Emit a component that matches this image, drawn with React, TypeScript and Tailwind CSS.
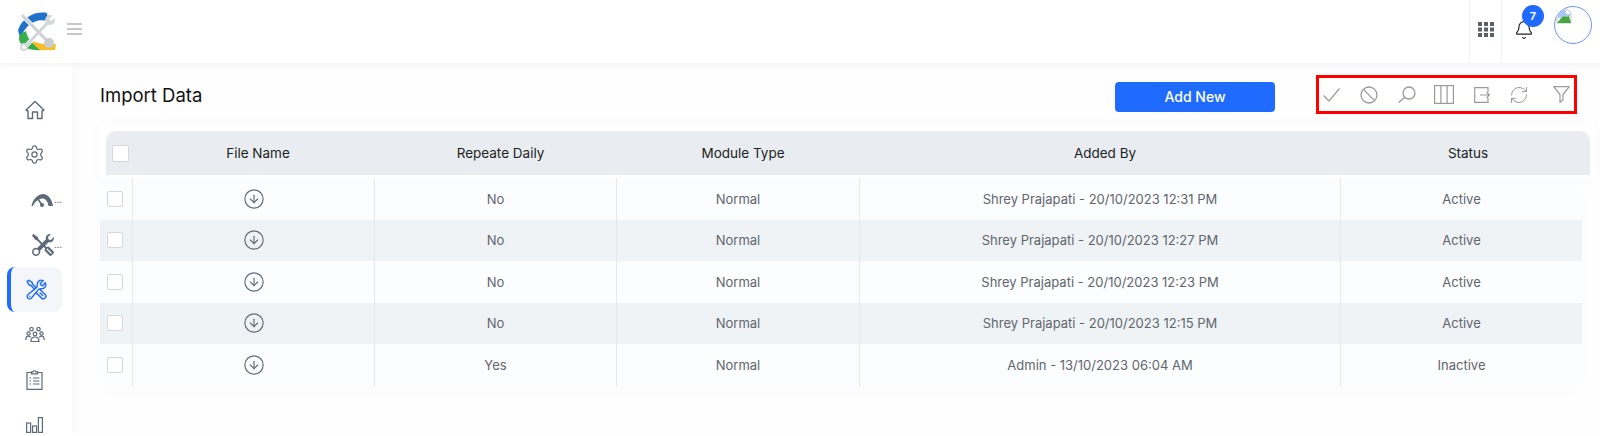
import type { ReactNode } from "react";
import { Bell, CircleArrowDown, RefreshCw, Settings } from "lucide-react";
import { BsTools } from "react-icons/bs";
import { HiOutlineWrenchScrewdriver } from "react-icons/hi2";

type Row = { repeat: string; by: string; status: string };

const rows: Row[] = [
  { repeat: "No", by: "Shrey Prajapati - 20/10/2023 12:31 PM", status: "Active" },
  { repeat: "No", by: "Shrey Prajapati - 20/10/2023 12:27 PM", status: "Active" },
  { repeat: "No", by: "Shrey Prajapati - 20/10/2023 12:23 PM", status: "Active" },
  { repeat: "No", by: "Shrey Prajapati - 20/10/2023 12:15 PM", status: "Active" },
  { repeat: "Yes", by: "Admin - 13/10/2023 06:04 AM", status: "Inactive" },
];

function Logo() {
  return (
    <svg width="40" height="40" viewBox="0 0 40 40" fill="none">
      <path d="M29 1 C17 -1 5 5 0 18 L2 26 C5 20 9 13 16 10 C20 8 25 8 30 9 Z" fill="#1f72c9" />
      <path d="M2 22 L8 19 C9 26 14 32 24 38 C14 39 1 36 1 26 Z" fill="#35ad4a" />
      <path d="M13 28 C20 32 27 33 38 32 L37 38 L22 38 C18 35 15 32 13 28 Z" fill="#f7bd23" />
      <path d="M4 3 L33 33" stroke="#fff" strokeWidth="4.5" />
      <path d="M35 5 L7 35" stroke="#fff" strokeWidth="4.5" />
      <path d="M4 3 L33 33" stroke="#cfd2d4" strokeWidth="3" />
      <path d="M33 7 L7 35" stroke="#d3d5d7" strokeWidth="3" />
      <circle cx="32" cy="8" r="5" fill="#d3d5d7" />
      <path d="M32 8 L40 1" stroke="#fff" strokeWidth="3" />
      <circle cx="6" cy="35" r="3" fill="#fff" stroke="#d3d5d7" strokeWidth="2" />
      <circle cx="31" cy="31" r="5" fill="#c9ccce" />
    </svg>
  );
}

function HomeIcon() {
  return (
    <svg width="20" height="20" viewBox="0 0 20 20" fill="none" stroke="currentColor" strokeWidth="1.4" strokeLinejoin="round">
      <path d="M1 10 L10 1.5 L19 10 L17 11 V18.5 H12.5 V12 H7.5 V18.5 H3 V11 Z" />
    </svg>
  );
}

function GaugeIcon() {
  return (
    <span className="ml-auto flex items-center">
      <svg width="24" height="16" viewBox="0 0 24 16" fill="none">
        <path d="M1.5 14 C3 6 9 2 13 2 C18 2 22 7 23 14 L18.5 14 C18 10 16 7 13 6.5 C9 6.5 5 9 3 14 Z" fill="#5d6a78" />
        <path d="M8 7 L12 13" stroke="#5d6a78" strokeWidth="1.6" />
        <circle cx="12" cy="13" r="2" fill="#5d6a78" />
      </svg>
      <span className="text-[9px] leading-none text-[#5d6a78]">...</span>
    </span>
  );
}

function ToolsIcon() {
  return (
    <span className="ml-auto flex items-center">
      <BsTools className="h-[22px] w-[22px] text-[#5d6a78]" />
      <span className="text-[9px] leading-none text-[#5d6a78]">...</span>
    </span>
  );
}

function UsersIcon() {
  return (
    <svg width="20" height="15" viewBox="0 0 20 15" fill="none" stroke="currentColor" strokeWidth="1.2">
      <circle cx="6.5" cy="2.2" r="1.7" />
      <circle cx="13.5" cy="2.2" r="1.7" />
      <circle cx="3.5" cy="6.5" r="1.6" />
      <circle cx="10" cy="7" r="1.8" />
      <circle cx="16.5" cy="6.5" r="1.6" />
      <path d="M0.8 13 C0.8 10.5 2 9.2 3.5 9.2 C4.6 9.2 5.4 9.8 5.8 10.6" />
      <path d="M19.2 13 C19.2 10.5 18 9.2 16.5 9.2 C15.4 9.2 14.6 9.8 14.2 10.6" />
      <path d="M6 14.5 C6 11.5 8 10 10 10 C12 10 14 11.5 14 14.5 Z" />
    </svg>
  );
}

function ClipboardIcon() {
  return (
    <svg width="17" height="20" viewBox="0 0 17 20" fill="none" stroke="currentColor" strokeWidth="1.2">
      <path d="M5 2.5 H1 V19.3 H16 V2.5 H12" />
      <path d="M5.5 3.8 V1.8 H7 C7 0.4 10 0.4 10 1.8 H11.5 V3.8 Z" />
      <path d="M3.5 8 H5 M7 8 H13.5 M3.5 11 H5 M7 11 H13.5 M3.5 14 H5 M7 14 H13.5" />
    </svg>
  );
}

function ChartIcon() {
  return (
    <svg width="17" height="16" viewBox="0 0 17 16" fill="none" stroke="currentColor" strokeWidth="1.2">
      <rect x="0.6" y="6" width="4" height="9.4" />
      <rect x="6.6" y="9" width="4" height="6.4" />
      <rect x="12.4" y="0.6" width="4" height="14.8" />
    </svg>
  );
}

function SideItem({ children, active }: { children: ReactNode; active?: boolean }) {
  return (
    <div
      className={
        active
          ? "flex h-[45px] w-[55px] shrink-0 items-center justify-center rounded-lg border-l-[4px] border-[#1f6bff] bg-[#f4f6fa] text-[#1f6bff]"
          : "flex h-[45px] w-[55px] shrink-0 items-center justify-center text-[#5d6a78]"
      }
    >
      {children}
    </div>
  );
}

function Sidebar() {
  return (
    <aside className="flex w-[72px] shrink-0 flex-col overflow-hidden bg-white pl-[7px] pt-[24px] shadow-[3px_0_10px_rgba(0,0,0,0.025)]">
      <SideItem><HomeIcon /></SideItem>
      <SideItem><Settings size={21} strokeWidth={1.4} /></SideItem>
      <SideItem><GaugeIcon /></SideItem>
      <SideItem><ToolsIcon /></SideItem>
      <SideItem active><HiOutlineWrenchScrewdriver className="h-[23px] w-[23px]" /></SideItem>
      <SideItem><UsersIcon /></SideItem>
      <SideItem><ClipboardIcon /></SideItem>
      <SideItem><ChartIcon /></SideItem>
    </aside>
  );
}

function Topbar() {
  return (
    <header className="relative z-10 flex h-[63px] shrink-0 items-center justify-between bg-white pl-[18px] pr-[8px] shadow-[0_2px_8px_rgba(0,0,0,0.05)]">
      <div className="flex items-center gap-[9px]">
        <Logo />
        <svg width="15" height="12" viewBox="0 0 15 12" stroke="#8b8f94" strokeWidth="1.2" className="mb-[5px]">
          <path d="M0 1h15M0 6h15M0 11h15" />
        </svg>
      </div>
      <div className="flex h-full items-center">
        <div className="flex h-full w-[33px] items-center justify-center border-x border-[#f1f2f4] pb-[5px]">
          <svg width="16" height="15" viewBox="0 0 16 15" fill="#5b6066">
            <path d="M0 0h4v4H0zM6 0h4v4H6zM12 0h4v4h-4zM0 5.5h4v4H0zM6 5.5h4v4H6zM12 5.5h4v4h-4zM0 11h4v4H0zM6 11h4v4H6zM12 11h4v4h-4z" />
          </svg>
        </div>
        <div className="relative flex h-full w-[44px] items-center justify-center pb-[3px]">
          <Bell size={20} strokeWidth={1.4} className="text-[#222]" />
          <span className="absolute left-[20px] top-[5px] flex h-[22px] w-[22px] items-center justify-center rounded-full bg-[#1f6bff] text-[11px] font-semibold text-white">7</span>
        </div>
        <div className="mb-[13px] ml-[8px] h-[38px] w-[38px] overflow-hidden rounded-full border border-[#6f96f0] pl-[1px] pt-[1px]">
          <svg width="16" height="16" viewBox="0 0 16 16" fill="none">
            <path d="M1 1 H11 L15 5 V15 H1 Z" fill="#fff" stroke="#c0c4c8" />
            <path d="M2 2 H10 V6 H14 V8 L2 10 Z" fill="#a9c7f2" />
            <path d="M1 15 L6 9 C8 8 11 9 13 8 L15 15 Z" fill="#4aa63f" />
          </svg>
        </div>
      </div>
    </header>
  );
}

function Toolbar() {
  return (
    <div className="flex h-[39px] items-center gap-[20px] border-[3px] border-[#ff0000] bg-white pl-[4px] pr-[4px] text-[#9a9a9a]">
      <svg width="17" height="14" viewBox="0 0 17 14" fill="none" stroke="currentColor" strokeWidth="1.2">
        <path d="M0.5 7.5 L6 13 L16.5 0.5" />
      </svg>
      <svg width="18" height="18" viewBox="0 0 18 18" fill="none" stroke="currentColor" strokeWidth="1.3">
        <circle cx="9" cy="9" r="8" />
        <path d="M3.4 3.4 L14.6 14.6" />
      </svg>
      <svg width="18" height="17" viewBox="0 0 18 17" fill="none" stroke="currentColor" strokeWidth="1.3">
        <circle cx="11" cy="7" r="6" />
        <path d="M6.8 11.2 L0.7 16.4" />
      </svg>
      <svg width="20" height="19" viewBox="0 0 20 19" fill="none" stroke="currentColor" strokeWidth="1.2" className="-ml-[2px]">
        <rect x="0.6" y="0.6" width="18.8" height="17.8" />
        <path d="M6.9 0.6 V18.4 M13.1 0.6 V18.4" />
      </svg>
      <svg width="16" height="16" viewBox="0 0 16 16" fill="none" stroke="currentColor" strokeWidth="1.2">
        <path d="M14 5 V0.7 H0.7 V15.3 H14 V11" />
        <path d="M6 8 H15.5 M12.5 5 L15.5 8 L12.5 11" />
      </svg>
      <RefreshCw size={20} strokeWidth={1.2} className="-mx-[1px]" />
      <svg width="17" height="17" viewBox="0 0 17 17" fill="none" stroke="currentColor" strokeWidth="1.2" className="ml-[5px]" strokeLinejoin="round">
        <path d="M0.7 0.7 H16.3 L10 8.5 V14 L7 16.3 V8.5 Z" />
      </svg>
    </div>
  );
}

function DataTable() {
  return (
    <div className="mt-[11px]">
      <div className="w-[1495px] bg-white pb-[3px] pl-[6px] pt-[6px] shadow-[0_0_16px_rgba(0,0,0,0.02)]">
        <div className="grid h-[44px] w-[1484px] grid-cols-[31px_242px_243px_242px_482px_1fr] items-center rounded-t-[10px] bg-[#e9ecf0] text-center text-[13.5px] font-normal text-[#1c1f24]">
          <span className="flex pl-[6px]">
            <span className="h-[17px] w-[17px] rounded-[2px] border border-[#d3d8de] bg-white" />
          </span>
          <span>File Name</span>
          <span>Repeate Daily</span>
          <span>Module Type</span>
          <span>Added By</span>
          <span>Status</span>
        </div>
      </div>
      <div className="w-[1482px] shadow-[0_6px_16px_rgba(0,0,0,0.01)]">
        {rows.map((row, i) => (
          <div
            key={row.by}
            className={
              i % 2 === 1
                ? "grid h-[41.5px] grid-cols-[33px_242px_242px_243px_481px_1fr] items-stretch bg-[#f0f3f6] text-center"
                : "grid h-[41.5px] grid-cols-[33px_242px_242px_243px_481px_1fr] items-stretch bg-[#fcfdfe] text-center"
            }
          >
            <div className="flex items-center border-r border-[#e6e9ec] pl-[7px]">
              <span className="h-[16px] w-[16px] rounded-[2px] border border-[#d3d8de] bg-white" />
            </div>
            <div className="flex items-center justify-center border-r border-[#e6e9ec]">
              <CircleArrowDown size={22} strokeWidth={1.25} className="text-[#5f6b78]" />
            </div>
            <div className="flex items-center justify-center border-r border-[#e6e9ec] pt-[1px]">{row.repeat}</div>
            <div className="flex items-center justify-center border-r border-[#e6e9ec] pt-[1px]">Normal</div>
            <div className="flex items-center justify-center border-r border-[#e6e9ec] pt-[1px]">{row.by}</div>
            <div className="flex items-center justify-center pt-[1px]">{row.status}</div>
          </div>
        ))}
      </div>
    </div>
  );
}

export default function App() {
  return (
    <div className="flex h-[436px] w-[1600px] flex-col overflow-hidden bg-[#fefefe] text-[13px] text-[#60666d] [font-family:Inter,'Liberation_Sans',sans-serif]">
      <Topbar />
      <div className="flex min-h-0 flex-1">
        <Sidebar />
        <main className="min-w-0 flex-1 pl-[28px] pr-[23px] pt-[12px]">
          <div className="flex items-center">
            <h1 className="mt-[2px] flex-1 text-[18.5px] font-normal text-[#111]">Import Data</h1>
            <button className="mr-[41px] mt-[4px] h-[30px] w-[160px] rounded-[4px] bg-[#1f6bff] text-[14px] font-medium text-white">Add New</button>
            <Toolbar />
          </div>
          <DataTable />
        </main>
      </div>
    </div>
  );
}
